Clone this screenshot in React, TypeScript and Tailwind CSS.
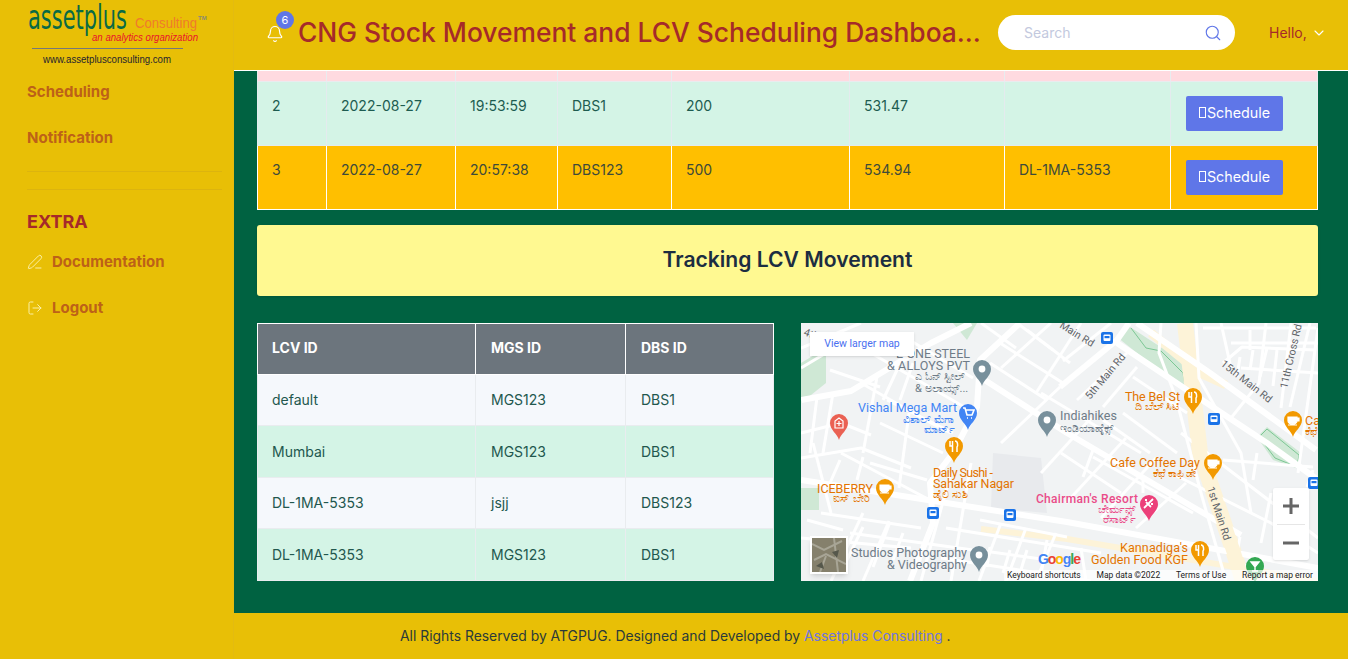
import { Bell, ChevronDown, LogOut, PenLine, Search } from 'lucide-react';

const font = { fontFamily: 'Inter, "Noto Sans", sans-serif' };

const scheduleRows = [
  { id: '2', date: '2022-08-27', time: '19:53:59', dbs: 'DBS1', qty: '200', value: '531.47', lcv: '', row: 'bg-[#d4f4e6] text-[#1d5c50]', cell: 'border-[#e4ebee]' },
  { id: '3', date: '2022-08-27', time: '20:57:38', dbs: 'DBS123', qty: '500', value: '534.94', lcv: 'DL-1MA-5353', row: 'bg-[#ffbf00] text-[#3d4a3a]', cell: 'border-white' },
];

const lcvRows = [
  ['default', 'MGS123', 'DBS1', 'bg-[#f5f8fc]'],
  ['Mumbai', 'MGS123', 'DBS1', 'bg-[#d4f4e6]'],
  ['DL-1MA-5353', 'jsjj', 'DBS123', 'bg-[#f5f8fc]'],
  ['DL-1MA-5353', 'MGS123', 'DBS1', 'bg-[#d4f4e6]'],
];

function Logo() {
  return (
    <svg width="234" height="70" viewBox="0 0 234 70" className="block">
      <text x="28" y="29" fontSize="34" fontFamily="DejaVu Sans" fill="#0a6a45" textLength="99" lengthAdjust="spacingAndGlyphs">assetplus</text>
      <text x="135" y="28" fontSize="15" fontFamily="Liberation Sans" fill="#f07a2c" textLength="62" lengthAdjust="spacingAndGlyphs">Consulting</text>
      <text x="198" y="20" fontSize="6" fontFamily="Liberation Sans" fontWeight="700" fill="#8a8a70">TM</text>
      <text x="92" y="41" fontSize="11" fontFamily="Liberation Sans" fontStyle="italic" fill="#e8112d" textLength="106" lengthAdjust="spacingAndGlyphs">an analytics organization</text>
      <line x1="32" y1="48.5" x2="183" y2="48.5" stroke="#76777a" strokeWidth="1" />
      <text x="43" y="63" fontSize="11" fontFamily="Liberation Sans" fill="#1f2430" textLength="128" lengthAdjust="spacingAndGlyphs">www.assetplusconsulting.com</text>
    </svg>
  );
}

function Sidebar() {
  return (
    <aside className="w-[234px] shrink-0 bg-[#e8bf06] border-r border-[#e3bb10]">
      <Logo />
      <nav className="pl-[27px] pr-[11px] text-[15px] font-bold text-[#bd6118]">
        <div className="h-[46px] pt-[11px]">Scheduling</div>
        <div className="h-[46px] pt-[11px]">Notification</div>
        <div className="mt-[9px] border-t border-[#dcb40e]" />
        <div className="mt-[17px] border-t border-[#dcb40e]" />
        <div className="mt-[20px] text-[18px] leading-[24px] text-[#a52a2a]">EXTRA</div>
        <div className="mt-[16px] flex items-center gap-[9px]">
          <PenLine size={16} strokeWidth={1.5} className="text-[#fbf0a6]" />
          <span className="leading-[24px]">Documentation</span>
        </div>
        <div className="mt-[22px] flex items-center gap-[9px]">
          <LogOut size={16} strokeWidth={1.5} className="text-[#fbf0a6]" />
          <span className="leading-[24px]">Logout</span>
        </div>
      </nav>
    </aside>
  );
}

function Header() {
  return (
    <header className="h-[71px] shrink-0 bg-[#e8bf06] border-b border-white flex items-center pb-[5px]">
      <div className="relative ml-[32px] mr-[15px] mt-[3px] w-[17px]">
        <Bell size={18} strokeWidth={1.6} className="text-white" />
        <span className="absolute -top-[14px] left-[10px] w-[18px] h-[18px] rounded-full bg-[#5f76e8] text-white text-[11px] leading-[18px] text-center">6</span>
      </div>
      <h1 className="w-[686px] truncate text-[26.4px] font-medium text-[#a52a2a]">CNG Stock Movement and LCV Scheduling Dashboard Overview</h1>
      <div className="ml-[14px] w-[237px] h-[35px] rounded-full bg-white flex items-center pl-[26px] pr-[13px]">
        <span className="flex-1 text-[14px] text-[#c3c9de]">Search</span>
        <Search size={18} strokeWidth={1.5} className="text-[#5f76e8]" />
      </div>
      <div className="ml-[34px] flex items-center gap-[4px] text-[14px] text-[#a52a2a]">
        Hello,
        <ChevronDown size={16} strokeWidth={1.7} className="text-white" />
      </div>
    </header>
  );
}

function ScheduleTable() {
  return (
    <table className="w-[1061px] table-fixed border-collapse text-[14px]">
      <colgroup>
        <col className="w-[69px]" />
        <col className="w-[129px]" />
        <col className="w-[102px]" />
        <col className="w-[114px]" />
        <col className="w-[178px]" />
        <col className="w-[155px]" />
        <col className="w-[166px]" />
        <col className="w-[147px]" />
      </colgroup>
      <tbody>
        <tr className="h-[10px] bg-[#ffdae0]">
          {[0, 1, 2, 3, 4, 5, 6, 7].map((i) => (
            <td key={i} className="border border-t-0 border-[#e9ecef] p-0" />
          ))}
        </tr>
        {scheduleRows.map((r) => (
          <tr key={r.id} className={`h-[64px] ${r.row}`}>
            {[r.id, r.date, r.time, r.dbs, r.qty, r.value, r.lcv].map((v, i) => (
              <td key={i} className={`border ${r.cell} px-[14px] pb-[16px] align-middle`}>{v}</td>
            ))}
            <td className={`border ${r.cell} pl-[15px] align-middle`}>
              <button className="h-[35px] w-[97px] rounded-[2px] bg-[#5f76e8] text-white text-[14.3px] pb-[1px] flex items-center justify-center">
                <span className="inline-block w-[7px] h-[11px] border border-white mr-[1px]" />
                Schedule
              </button>
            </td>
          </tr>
        ))}
      </tbody>
    </table>
  );
}

function LcvTable() {
  return (
    <table className="w-[517px] h-[258px] table-fixed border-collapse text-[14px] text-[#22574e]">
      <colgroup>
        <col className="w-[218px]" />
        <col className="w-[150px]" />
        <col className="w-[148px]" />
      </colgroup>
      <thead>
        <tr className="h-[51px] bg-[#6c757d] text-white font-bold">
          <th className="border border-white px-[14px] pb-[2px] text-left font-bold">LCV ID</th>
          <th className="border border-white px-[15px] pb-[2px] text-left font-bold">MGS ID</th>
          <th className="border border-white px-[15px] pb-[2px] text-left font-bold">DBS ID</th>
        </tr>
      </thead>
      <tbody>
        {lcvRows.map((r, i) => (
          <tr key={i} className={r[3]}>
            <td className="border border-[#e9ecef] px-[14px]">{r[0]}</td>
            <td className="border border-[#e9ecef] px-[15px]">{r[1]}</td>
            <td className="border border-[#e9ecef] px-[15px]">{r[2]}</td>
          </tr>
        ))}
      </tbody>
    </table>
  );
}

type PinKind = 'food' | 'coffee' | 'cart' | 'dot' | 'hospital' | 'hotel' | 'bar';

function Pin({ x, y, color, kind }: { x: number; y: number; color: string; kind: PinKind }) {
  // x,y is the centre of the pin head
  return (
    <g transform={`translate(${x} ${y})`}>
      <path d="M0 17C-1.5 11-9 7-9 0A9 9 0 0 1 9 0C9 7 1.5 11 0 17Z" fill={color} />
      {kind === 'food' && <path d="M-4-5V0H-1.5V6M-1.5-5V0M1-5C4-5 4 0 3 1V6" stroke="#fff" strokeWidth="1.5" fill="none" />}
      {kind === 'coffee' && <path d="M-5-3H4V1C4 3 2 4-.5 4S-5 3-5 1ZM4-2H6V1H4M-5 5H4" stroke="#fff" strokeWidth="1.2" fill="#fff" />}
      {kind === 'cart' && <path d="M-5-5H-3L-1 2H4L6-3H-2.5M-1 5H0M3 5H4" stroke="#fff" strokeWidth="1.6" fill="none" />}
      {kind === 'dot' && <circle r="3.4" fill="#fff" />}
      {kind === 'hospital' && <path d="M-4 5V-2L0-5 4-2V5ZM0-2V3M-2.5 .5H2.5" stroke="#fff" strokeWidth="1.2" fill="none" />}
      {kind === 'hotel' && <path d="M-5 4 4-5M-3-2 2 3M-4-4H-2M2 0H4" stroke="#fff" strokeWidth="1.8" fill="none" />}
      {kind === 'bar' && <path d="M-4-4H4L0 1ZM0 1V5M-3 5H3" stroke="#fff" strokeWidth="1.4" fill="#fff" />}
    </g>
  );
}

function Bus({ x, y }: { x: number; y: number }) {
  return (
    <g transform={`translate(${x} ${y})`}>
      <rect x="-6" y="-6" width="12" height="12" rx="2" fill="#1a73e8" />
      <rect x="-3.5" y="-3.5" width="7" height="6.5" rx="1" fill="#fff" />
      <rect x="-2.5" y="-2" width="5" height="2.2" fill="#1a73e8" />
    </g>
  );
}

const wideRoads = [
  '0,157 266,199 517,245',
  '336,0 409,50 515,127',
  '316,20 386,67 466,120 517,157',
  '179,54 266,110 392,184 440,212',
  '219,0 179,37 176,84 152,130 129,160 132,200 109,258',
  '259,64 316,17 328,0',
  '0,77 50,68 80,50 130,20 170,0',
];

const thinRoads = [
  '0,110 40,100 70,112', '0,135 60,125 110,145', '20,190 120,205', '0,215 110,225',
  '30,258 62,190', '62,258 88,198', '12,120 30,190', '108,90 98,165',
  '60,60 130,100 150,110', '70,30 165,85', '100,12 172,55', '40,130 125,175',
  '150,150 120,258', '170,140 150,258', '200,200 178,258', '225,205 205,258', '255,210 235,258',
  '145,205 300,230', '140,235 290,258',
  '250,0 200,45', '280,0 235,70', '310,0 262,38', '180,0 215,25',
  '360,0 358,30 375,75 400,170 425,258', '395,0 398,55 440,130 450,190',
  '259,64 200,120', '290,95 240,150', '325,115 265,180', '355,135 300,195', '385,160 335,205',
  '420,0 430,45', '465,0 458,60 430,95', '490,0 480,85', '430,20 517,20', '440,45 517,50', '517,5 497,150',
  '380,110 517,215', '370,150 470,200 517,230',
  '260,130 320,170', '240,70 340,130', '0,25 60,0', '0,45 55,12', '280,225 285,258', '440,240 470,258', '470,170 460,220', '495,180 490,225',
  '16,74 9,130', '32,70 22,130', '76,54 62,130', '96,47 82,77', '112,40 99,77', '79,100 142,130', '86,77 152,110', '29,47 79,64',
  '216,0 252,27', '226,7 269,40', '189,40 246,77', '199,20 262,60',
  '276,77 326,30', '299,30 259,64', '336,44 302,84', '332,54 386,90', '322,90 376,130', '302,97 349,130',
  '422,40 441,24 515,27', '452,27 449,47', '466,25 459,54', '476,27 472,63', '439,34 436,54', '402,5 515,5', '449,7 449,27', '509,0 489,84',
  '39,137 29,160', '62,134 56,157', '69,140 126,157', '89,199 72,244', '62,204 46,237', '102,210 92,237', '49,210 172,227', '6,197 42,207',
  '179,197 266,214', '176,227 269,240', '209,227 202,250', '189,224 186,244', '226,227 219,250', '246,217 239,257',
  '292,134 392,190', '342,154 342,170', '292,127 282,154', '422,137 512,144', '439,214 436,230', '512,147 506,164', '456,130 452,157',
];

function MapDrawing() {
  return (
    <svg width="517" height="258" viewBox="0 0 517 258" className="block" fontFamily="Roboto, sans-serif">
      <rect width="517" height="258" fill="#f1f3f4" />
      <polygon points="0,40 25,25 25,60 0,80" fill="#cfe8d5" />
      <polygon points="0,165 18,165 18,187 0,187" fill="#cfe8d5" />
      <polygon points="152,0 176,0 166,17" fill="#cfe8d5" />
      <polygon points="316,14 326,2 384,40 386,64 376,62" fill="#cfe8d5" />
      <polygon points="456,114 466,104 500,130 498,146 472,137" fill="#cfe8d5" />
      <polyline points="330,5 345,25 360,28 382,50 384,62" fill="none" stroke="#7cc794" strokeWidth="1" />
      <polyline points="458,114 466,106 498,132 496,144 474,135 458,114" fill="none" stroke="#7cc794" strokeWidth="1" />
      <polygon points="192,130 240,135 246,190 190,185" fill="#e8eaed" />

      <polyline points="350,10 384,38" fill="none" stroke="#fdf3d8" strokeWidth="9" />
      <polyline points="392,47 425,62" fill="none" stroke="#fdf3d8" strokeWidth="9" />
      <polyline points="180,206 266,216 517,258" fill="none" stroke="#fdf3d8" strokeWidth="6" />
      <polyline points="384,0 399,130 432,227 442,258" fill="none" stroke="#fdf3d8" strokeWidth="16" />
      <g fill="none" stroke="#fff" strokeLinejoin="round">
        {thinRoads.map((p) => (
          <polyline key={p} points={p} strokeWidth="3" />
        ))}
        {wideRoads.map((p) => (
          <polyline key={p} points={p} strokeWidth="6" />
        ))}
      </g>
      <polyline points="392,70 399,130 432,227 442,258" fill="none" stroke="#fdf3d8" strokeWidth="14" />

      <g fill="#5f6368" fontSize="10.5">
        <text transform="translate(2 12) rotate(20)">4th Main</text>
        <text transform="translate(258 4) rotate(32)">Main Rd</text>
        <text transform="translate(289 77) rotate(-50)">5th Main Rd</text>
        <text transform="translate(419 42) rotate(38)">15th Main Rd</text>
        <text transform="translate(486 66) rotate(-77)">11th Cross Rd</text>
        <text transform="translate(406 165) rotate(72)">1st Main Rd</text>
      </g>
      <g fill="#6e7b87" fontSize="12.5">
        <text x="169" y="35" textAnchor="end">E-ONE STEEL</text>
        <text x="86" y="47" textLength="83">&amp; ALLOYS PVT</text>
        <text x="259" y="97" textLength="57">Indiahikes</text>
        <text x="50" y="234" textLength="116">Studios Photography</text>
        <text x="86" y="246" textLength="80">&amp; Videography</text>
      </g>
      <g fill="#6e7b87" fontSize="11">
        <text x="114" y="57">ಎ ಓನ್ ಸ್ಟೀಲ್</text>
        <text x="114" y="69">&amp; ಅಲಾಯ್ಸ್...</text>
        <text x="259" y="109">ಇಂಡಿಯಾಹೈಕ್ಸ್</text>
      </g>
      <text x="57" y="89" fontSize="12.5" fill="#4285f4" textLength="99">Vishal Mega Mart</text>
      <g fill="#4285f4" fontSize="11">
        <text x="102" y="100">ವಿಶಾಲ್ ಮೆಗಾ</text>
        <text x="123" y="110">ಮಾರ್ಟ್</text>
      </g>
      <g fill="#e37400" fontSize="12.5">
        <text x="324" y="78" textLength="55">The Bel St</text>
        <text x="309" y="144" textLength="90">Cafe Coffee Day</text>
        <text x="132" y="154" textLength="60">Daily Sushi -</text>
        <text x="132" y="165" textLength="81">Sahakar Nagar</text>
        <text x="16" y="170" textLength="56">ICEBERRY</text>
        <text x="319" y="229" textLength="68">Kannadiga's</text>
        <text x="290" y="241" textLength="97">Golden Food KGF</text>
        <text x="504" y="102">Cafe</text>
      </g>
      <g fill="#e37400" fontSize="11">
        <text x="334" y="87">ದಿ ಬೆಲ್ ಸಿಟಿ</text>
        <text x="352" y="154">ಕೆಫೆ ಕಾಫಿ ಡೇ</text>
        <text x="132" y="175">ಡೈಲಿ ಸುಶಿ</text>
        <text x="32" y="179">ಐಸ್ ಬೇರಿ</text>
        <text x="504" y="112">ಕೆಫೆ</text>
      </g>
      <text x="235" y="180" fontSize="12" fontWeight="500" fill="#ea4c89" textLength="102">Chairman's Resort</text>
      <g fill="#ea4c89" fontSize="11">
        <text x="297" y="190">ಚೇರ್ಮನ್ಸ್</text>
        <text x="302" y="200">ರೆಸಾರ್ಟ್</text>
      </g>

      <Pin x={181} y={46} color="#78909c" kind="dot" />
      <Pin x={167} y={90} color="#4285f4" kind="cart" />
      <Pin x={38} y={100} color="#ea6153" kind="hospital" />
      <Pin x={246} y={97} color="#78909c" kind="dot" />
      <Pin x={392} y={74} color="#f29900" kind="food" />
      <Pin x={153} y={123} color="#f29900" kind="food" />
      <Pin x={412} y={140} color="#f29900" kind="coffee" />
      <Pin x={84} y={165} color="#f29900" kind="coffee" />
      <Pin x={492} y={97} color="#f29900" kind="coffee" />
      <Pin x={348} y={181} color="#ec407a" kind="hotel" />
      <Pin x={399} y={227} color="#f29900" kind="food" />
      <Pin x={178} y={232} color="#78909c" kind="dot" />
      <Pin x={454} y={243} color="#34a853" kind="bar" />

      <Bus x={306} y={15} />
      <Bus x={413} y={96} />
      <Bus x={132} y={190} />
      <Bus x={209} y={192} />
      <Bus x={513} y={160} />

      <text x="237" y="241" fontSize="14" fontFamily="Liberation Sans" fontWeight="700" textLength="43">
        <tspan fill="#4285f4">G</tspan>
        <tspan fill="#ea4335">o</tspan>
        <tspan fill="#fbbc05">o</tspan>
        <tspan fill="#4285f4">g</tspan>
        <tspan fill="#34a853">l</tspan>
        <tspan fill="#ea4335">e</tspan>
      </text>
    </svg>
  );
}

function MapPanel() {
  return (
    <div className="relative w-[517px] h-[258px] overflow-hidden">
      <MapDrawing />
      <div className="absolute left-[9px] top-[9px] w-[104px] h-[24px] bg-white shadow-sm flex items-center justify-center text-[10.5px] text-[#4a6ff0]" style={{ fontFamily: 'Roboto, sans-serif' }}>
        View larger map
      </div>
      <div className="absolute left-[9px] top-[213px] w-[38px] h-[38px] border-2 border-white shadow-md bg-[#7b7865]">
        <svg viewBox="0 0 34 34" className="w-full h-full">
          <rect width="34" height="34" fill="#85806c" />
          <path d="M0 6 12 12 30 3M2 22 14 16 34 26M8 34 14 18M22 0 26 34" stroke="#a8a596" strokeWidth="2" fill="none" />
          <path d="M4 28 10 24 12 31ZM20 14 27 12 25 20Z" fill="#55574b" />
        </svg>
      </div>
      <div className="absolute right-[9px] top-[165px] w-[36px] h-[72px] rounded-[2px] bg-white shadow flex flex-col items-center">
        <svg width="18" height="36" viewBox="0 0 18 36">
          <path d="M1 18H17M9 10V26" stroke="#666" strokeWidth="3" />
        </svg>
        <div className="w-[28px] border-t border-[#e6e6e6]" />
        <svg width="18" height="35" viewBox="0 0 18 35">
          <path d="M1 18H17" stroke="#666" strokeWidth="3" />
        </svg>
      </div>
      <div className="absolute right-0 bottom-0 h-[11px] w-[314px] flex items-center justify-between pl-[3px] pr-[5px] bg-white/70 text-[8.5px] text-[#222]" style={{ fontFamily: 'Roboto, sans-serif' }}>
        <span>Keyboard shortcuts</span>
        <span>Map data ©2022</span>
        <span>Terms of Use</span>
        <span>Report a map error</span>
      </div>
    </div>
  );
}

export default function App() {
  return (
    <div className="flex h-screen w-full overflow-hidden bg-[#e8bf06]" style={font}>
      <Sidebar />
      <div className="flex-1 min-w-0 flex flex-col">
        <Header />
        <main className="flex-1 min-h-0 bg-[#006241] pl-[23px] pr-[30px]">
          <ScheduleTable />
          <div className="mt-[15px] h-[71px] pb-[1px] rounded-[3px] bg-[#fff991] shadow-sm flex items-center justify-center text-[21.1px] font-semibold text-[#1c2d41]">
            Tracking LCV Movement
          </div>
          <div className="mt-[27px] flex gap-[27px]">
            <LcvTable />
            <MapPanel />
          </div>
        </main>
        <footer className="h-[46px] shrink-0 pl-[166px] flex items-center text-[13.9px] text-[#2b3a3a]">
          <span>
            All Rights Reserved by ATGPUG. Designed and Developed by <span className="text-[#6f74e0]">Assetplus Consulting</span> .
          </span>
        </footer>
      </div>
    </div>
  );
}
